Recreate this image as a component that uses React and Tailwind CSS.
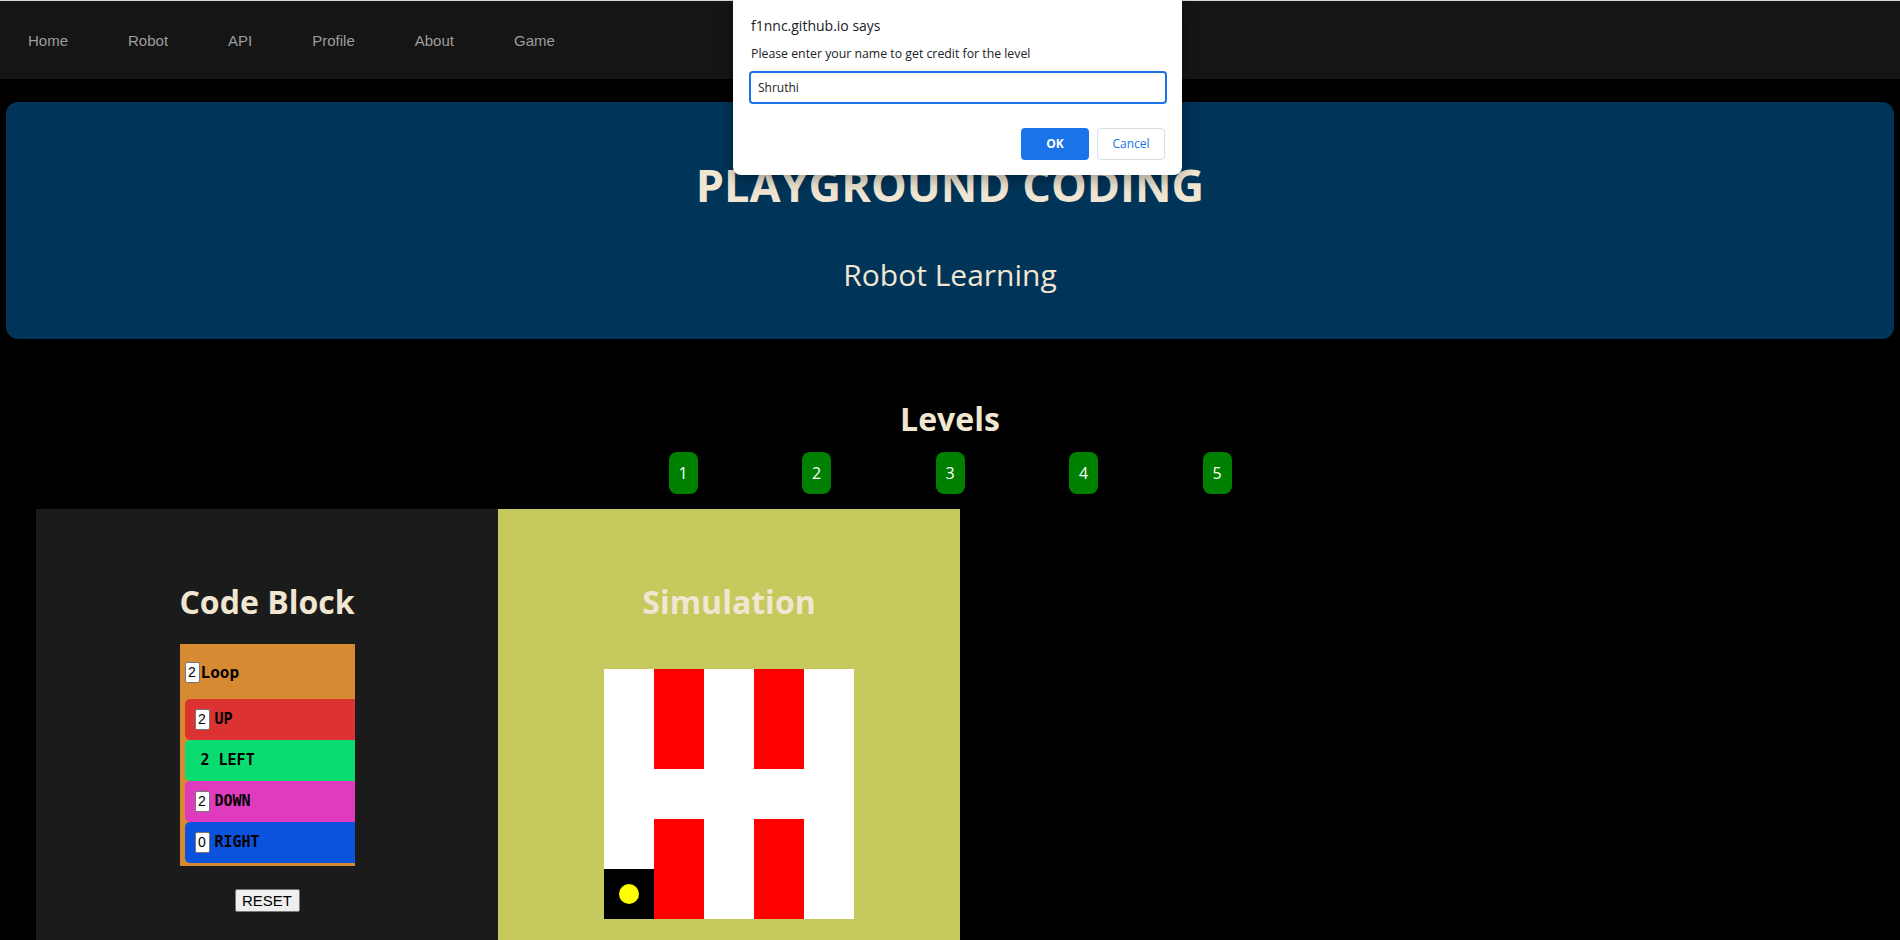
import { useState } from "react";

const navLinks = ["Home", "Robot", "API", "Profile", "About", "Game"];
const levels = [1, 2, 3, 4, 5];

// grid of the maze: w = free, r = wall, b = start cell
const maze = [
  ["w", "r", "w", "r", "w"],
  ["w", "r", "w", "r", "w"],
  ["w", "w", "w", "w", "w"],
  ["w", "r", "w", "r", "w"],
  ["b", "r", "w", "r", "w"],
];

const cellColor = {
  w: "bg-white",
  r: "bg-[#ff0000]",
  b: "bg-black",
};

const commands = [
  { label: "UP", value: "2", color: "bg-[#dc3232]", input: true },
  { label: "LEFT", value: "2", color: "bg-[#0adc72]", input: false },
  { label: "DOWN", value: "2", color: "bg-[#e03bbf]", input: true },
  { label: "RIGHT", value: "0", color: "bg-[#0b52dc]", input: true },
];

const NumBox = ({ value }) => (
  <span className="w-[15px] h-[21px] bg-white border border-[#767676] rounded-[2px] flex items-center justify-center text-[14px] font-normal text-black font-['Liberation_Sans',sans-serif]">
    {value}
  </span>
);

const CommandRow = ({ cmd }) => (
  <div
    className={`${cmd.color} w-[200px] h-[41px] rounded-l-[5px] flex items-center gap-[5px] ${
      cmd.input ? "pl-[10px]" : "pl-[16px]"
    }`}
  >
    {cmd.input ? (
      <>
        <NumBox value={cmd.value} />
        <span>{cmd.label}</span>
      </>
    ) : (
      <span className="whitespace-pre">{`${cmd.value} ${cmd.label}`}</span>
    )}
  </div>
);

const PromptDialog = () => {
  const [name, setName] = useState("Shruthi");

  return (
    <div className="absolute left-[733px] top-0 w-[449px] h-[175px] bg-white rounded-b-[8px] shadow-[0_4px_16px_rgba(0,0,0,0.35)] px-[16px] font-['Open_Sans',sans-serif] text-[#202124]">
      <div className="pt-[15px] text-[14px] leading-[22px] pl-[2px]">f1nnc.github.io says</div>
      <div className="mt-[8px] text-[12.3px] leading-[18px] pl-[2px]">
        Please enter your name to get credit for the level
      </div>
      <input
        value={name}
        onChange={(e) => setName(e.target.value)}
        className="mt-[8px] w-[418px] h-[33px] border-2 border-[#1a73e8] rounded-[4px] px-[7px] text-[12px] outline-none"
      />
      <div className="mt-[24px] flex justify-end gap-[8px] pr-[1px]">
        <button className="w-[68px] h-[32px] rounded-[4px] bg-[#1a73e8] text-white text-[12px] font-bold">
          OK
        </button>
        <button className="w-[68px] h-[32px] rounded-[4px] border border-[#dadce0] bg-white text-[#1a73e8] text-[12px]">
          Cancel
        </button>
      </div>
    </div>
  );
};

export default function App() {
  return (
    <div className="relative min-h-screen bg-black font-['Open_Sans',sans-serif] text-[#f0e6d2] overflow-hidden">
      <div className="h-[1px] bg-[#d9d9d9]" />

      {/* navbar */}
      <nav className="h-[78px] pt-[2px] bg-[#151515] flex items-center pl-[28px] gap-[60px] font-['Liberation_Sans',Arial,sans-serif] text-[15px] text-[#9d9d9d]">
        {navLinks.map((link) => (
          <a key={link} href="#" className="hover:text-white">
            {link}
          </a>
        ))}
      </nav>

      {/* header */}
      <header className="mt-[23px] mx-[6px] h-[237px] bg-[#003459] rounded-[12px] flex flex-col items-center">
        <h1 className="mt-[52px] text-[45px] font-bold leading-[61px]">PLAYGROUND CODING</h1>
        <p className="mt-[39px] text-[30px] leading-[41px]">Robot Learning</p>
      </header>

      {/* levels */}
      <section className="flex flex-col items-center">
        <h2 className="mt-[58px] text-[32px] font-bold leading-[43px]">Levels</h2>
        <div className="mt-[12px] flex gap-[104.5px]">
          {levels.map((lvl) => (
            <button
              key={lvl}
              className="w-[29px] h-[42px] rounded-[8px] bg-[#008000] text-white text-[16px] flex items-center justify-center"
            >
              {lvl}
            </button>
          ))}
        </div>
      </section>

      {/* workspace */}
      <div className="mt-[15px] pl-[36px] flex">
        <div className="w-[462px] h-[440px] bg-[#1c1b1c] flex flex-col items-center">
          <h2 className="mt-[71px] text-[32px] font-bold leading-[43px]">Code Block</h2>
          <div className="mt-[21px] w-[175px] h-[222px] bg-[#d88a33] overflow-hidden pl-[5px] text-black font-['DejaVu_Sans_Mono',monospace] font-bold text-[15px]">
            <div className="h-[55px] flex items-center pt-[2px]">
              <NumBox value="2" />
              <span className="text-[16px] ml-[1px]">Loop</span>
            </div>
            {commands.map((cmd) => (
              <CommandRow key={cmd.label} cmd={cmd} />
            ))}
          </div>
          <button className="mt-[23px] w-[65px] h-[23px] bg-[#efefef] border border-[#767676] rounded-[2px] text-black text-[15px] leading-none font-['Liberation_Sans',Arial,sans-serif]">
            RESET
          </button>
        </div>

        <div className="w-[462px] h-[440px] bg-[#c6c95e] flex flex-col items-center">
          <h2 className="mt-[71px] text-[32px] font-bold leading-[43px]">Simulation</h2>
          <div className="mt-[46px] grid grid-cols-[repeat(5,50px)] grid-rows-[repeat(5,50px)]">
            {maze.flat().map((c, i) => (
              <div key={i} className={`${cellColor[c]} flex items-center justify-center`}>
                {c === "b" && <div className="w-[20px] h-[20px] rounded-full bg-[#ffff00]" />}
              </div>
            ))}
          </div>
        </div>
      </div>

      <PromptDialog />
    </div>
  );
}
